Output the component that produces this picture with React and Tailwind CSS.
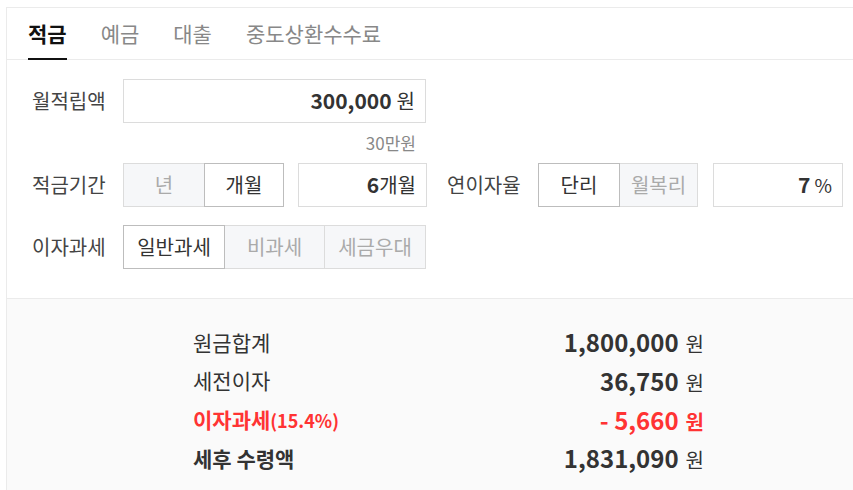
import React from 'react'

const font = { fontFamily: '"Noto Sans CJK KR", "Noto Sans", sans-serif' }

function Toggle({ items }) {
  return (
    <div className="flex h-[44px]">
      {items.map((it, i) => (
        <div
          key={it.label}
          className={
            'flex items-center justify-center text-[20px] ' +
            it.w +
            (it.on
              ? ' bg-white border border-[#bdbdbd] text-[#333] z-10'
              : ' bg-[#f6f7f9] border border-[#dcdcdc] text-[#aaa]') +
            (i > 0 ? ' -ml-px' : '')
          }
        >
          {it.label}
        </div>
      ))}
    </div>
  )
}

function Result({ label, note, value, red, bold }) {
  const color = red ? 'text-[#ff3333]' : 'text-[#333]'
  return (
    <div className={'flex items-center justify-between h-[38.7px] ' + color}>
      <span className={'text-[21px] ' + (bold || red ? 'font-bold' : '')}>
        {label}
        {note && <span className="text-[18px]">{note}</span>}
      </span>
      <span className="flex items-baseline gap-[7px]">
        <span className="text-[24px] font-bold">{value}</span>
        <span className={'text-[20px] ' + (red ? 'font-bold' : '')}>원</span>
      </span>
    </div>
  )
}

export default function App() {
  return (
    <div className="w-[853px] h-[490px] bg-white pt-[7px] pl-[6px] overflow-hidden" style={font}>
      <div className="border-l border-t border-[#ebebeb] h-full">
        <div className="flex h-[52px] gap-[34px] pl-[21px] border-b border-[#ebebeb] text-[21px]">
          <div className="flex items-center font-bold text-[#111] border-b-2 border-[#111] -mb-px pt-[2px]">적금</div>
          <div className="flex items-center text-[#888]">예금</div>
          <div className="flex items-center text-[#888]">대출</div>
          <div className="flex items-center text-[#888]">중도상환수수료</div>
        </div>

        <div className="pl-[25px] pt-[19px] pb-[29px] text-[#444]">
          <div className="flex items-center">
            <div className="w-[91px] text-[20px]">월적립액</div>
            <div className="w-[303px] h-[44px] border border-[#dcdcdc] flex items-center justify-end pr-[10px] text-[#333]">
              <span className="text-[21px] font-bold">300,000</span>
              <span className="text-[20px] ml-[5px]">원</span>
            </div>
          </div>
          <div className="w-[394px] h-[40px] flex items-center justify-end pr-[10px] text-[17px] text-[#888]">30만원</div>

          <div className="flex items-center">
            <div className="w-[91px] text-[20px]">적금기간</div>
            <Toggle
              items={[
                { label: '년', w: 'w-[82px]' },
                { label: '개월', w: 'w-[80px]', on: true },
              ]}
            />
            <div className="ml-[14px] w-[129px] h-[44px] border border-[#dcdcdc] flex items-center justify-end pr-[10px] text-[#333]">
              <span className="text-[21px] font-bold">6</span>
              <span className="text-[20px]">개월</span>
            </div>
            <div className="ml-[20px] w-[91px] text-[20px]">연이자율</div>
            <Toggle
              items={[
                { label: '단리', w: 'w-[82px]', on: true },
                { label: '월복리', w: 'w-[79px]' },
              ]}
            />
            <div className="ml-[15px] w-[130px] h-[44px] border border-[#dcdcdc] flex items-center justify-end pr-[10px] text-[#333]">
              <span className="text-[21px] font-bold">7</span>
              <span className="text-[19px] ml-[4px]">%</span>
            </div>
          </div>

          <div className="flex items-center mt-[18px]">
            <div className="w-[91px] text-[20px]">이자과세</div>
            <Toggle
              items={[
                { label: '일반과세', w: 'w-[102px]', on: true },
                { label: '비과세', w: 'w-[101px]' },
                { label: '세금우대', w: 'w-[102px]' },
              ]}
            />
          </div>
        </div>

        <div className="bg-[#fafafa] border-t border-[#ebebeb] h-full pt-[24px]">
          <div className="ml-[186px] w-[511px]">
            <Result label="원금합계" value="1,800,000" />
            <Result label="세전이자" value="36,750" />
            <Result label="이자과세" note="(15.4%)" value="- 5,660" red />
            <Result label="세후 수령액" value="1,831,090" bold />
          </div>
        </div>
      </div>
    </div>
  )
}
